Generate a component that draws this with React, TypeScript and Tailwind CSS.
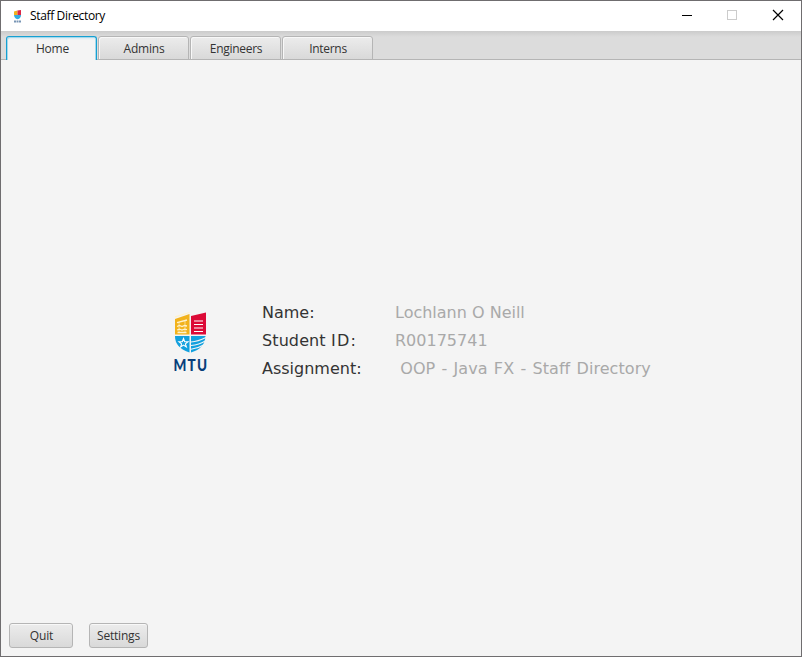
import React from "react";

const tabs = ["Admins", "Engineers", "Interns"];
const tabTracking = ["tracking-[-0.2px]", "tracking-[-0.3px]", "tracking-[-0.3px]"];

function Crest({ className }: { className: string }) {
  return (
    <svg viewBox="0 0 32 60" className={className}>
      <path d="M1 7 L15.500 2 V22.500 H1 Z" fill="#f2b21b" />
      <path d="M17 4 L32 0.5 V22.5 H17 Z" fill="#dc0a37" />
      <path d="M1 24 H15.500 V40.500 Q1 36 1 24 Z" fill="#12a0de" />
      <path d="M17 24 H31.5 Q31 36.500 17 40.500 Z" fill="#12a0de" />
      <path d="M1 4.800 L15.500 0.500 M3 10.700 L13 8 M3 14.500 L5.500 13.500 L8 14.500 L10.500 13.500 L13 14 M3 18 L5.500 17.200 L8 18 L10.500 17.200 L13 17.700 M3.500 20.500 H12.500" stroke="#fff2cc" strokeWidth="1.3" fill="none" />
      <path d="M5 10 V20 M11 9 V20" stroke="#fff2cc" strokeWidth="0.6" />
      <path d="M20 9 H29 M20 12.500 H29 M20 16 H29 M20 19.500 H29" stroke="#fff" strokeWidth="1.2" />
      <path d="M9.500 26.500 L10.700 29.800 H14 L11.400 31.900 L12.400 35 L9.500 33.100 L6.600 35 L7.600 31.900 L5 29.800 H8.300 Z" stroke="#fff" strokeWidth="1.1" fill="none" />
      <path d="M17 30 Q24 29.500 32 25.500 M17 33.500 Q25 33 32 28.500 M17 37.200 Q24 36.500 30 32.800" stroke="#f4f4f4" strokeWidth="1.1" fill="none" />
      <text transform="translate(-0.5 59) scale(0.82 1)" textLength="41" lengthAdjust="spacing" fontFamily="Lato, sans-serif" fontWeight="900" fontSize="16.500" fill="#083e7a">MTU</text>
    </svg>
  );
}

function TitleMark() {
  return (
    <svg viewBox="0 0 9 13" className="ml-3 h-[13px] w-[9px]">
      <path d="M1 1.500 L4.500 0.500 V5 H1 Z" fill="#f2b21b" />
      <path d="M4.500 0.500 L8 0 V5 H4.500 Z" fill="#dc2747" />
      <path d="M1 5 H8 Q8 8.500 4.600 9.300 Q1.200 8.500 1 5 Z" fill="#35ace0" />
      <path d="M1 11.500 H8" stroke="#7895b5" strokeWidth="2" strokeDasharray="2 0.5" />
    </svg>
  );
}

export default function App() {
  return (
    <div className="flex h-[657px] w-[802px] flex-col overflow-hidden border border-[#6f6d6f] bg-[#f4f4f4] font-['Open_Sans','Noto_Sans',sans-serif] text-[12px] text-[#333]">
      <header className="flex h-[30px] shrink-0 items-center bg-white text-black">
        <TitleMark />
        <h1 className="ml-2 text-[12px] leading-4 tracking-[-0.35px]">Staff Directory</h1>
        <svg className="ml-auto h-[30px] w-[138px]" viewBox="0 0 138 30" fill="none" shapeRendering="crispEdges">
          <path d="M19 14.500 H29" stroke="#000" />
          <rect x="64.500" y="9.500" width="9" height="9" stroke="#ccc" />
          <path d="M110 9 L120 19 M120 9 L110 19" stroke="#000" strokeWidth="1.2" shapeRendering="auto" />
        </svg>
      </header>
      <nav className="flex h-[29px] shrink-0 items-end gap-px bg-[linear-gradient(#cbcbcb,#dcdcdc_6px,#dcdcdc)] pl-[5px] shadow-[inset_0_-1px_0_#b5b5b5]">
        <button className="h-6 w-[91px] rounded-t-[3px] border border-b-0 border-[#15a0d2] bg-[linear-gradient(#dcecf3_1px,#f4f4f4_3px)] pt-px pl-0.5 leading-[22px] tracking-[-0.2px] shadow-[inset_1px_1px_0_#a5d8eb,inset_-1px_0_0_#a5d8eb]">Home</button>
        {tabs.map((t, i) => (
          <button key={t} className={`h-6 w-[91px] rounded-t-[3px] border border-[#b5b5b5] bg-[linear-gradient(#ececec,#d9d9d9)] pt-px pl-px leading-[20px] shadow-[inset_1px_1px_0_#f8f8f8] ${tabTracking[i]}`}>{t}</button>
        ))}
      </nav>
      <main className="flex flex-1 flex-col">
        <section className="flex pt-[239px] pl-[173px] font-['DejaVu_Sans',sans-serif] text-[16px] leading-7">
          <Crest className="mt-[13px] h-[60px] w-8 overflow-visible" />
          <div className="ml-14 w-[133px]">
            <p>Name:</p>
            <p className="tracking-[0.1px]">Student <span className="tracking-[1.3px]">ID:</span></p>
            <p>Assignment:</p>
          </div>
          <div className="whitespace-pre text-[#a9a9a9]">
            <p>Lochlann O Neill</p>
            <p>R00175741</p>
            <p className="-ml-px tracking-[0.06px] [word-spacing:1.1px]">{" OOP - Java FX - Staff Directory"}</p>
          </div>
        </section>
        <footer className="mt-auto mb-2 flex gap-4 pl-2">
          <button className="h-[25px] w-16 rounded-[3px] border border-[#b5b5b5] bg-[linear-gradient(#ececec,#d9d9d9)] pl-px tracking-[-0.1px] shadow-[inset_0_1px_0_#f8f8f8]">Quit</button>
          <button className="h-[25px] w-[59px] rounded-[3px] border border-[#b5b5b5] bg-[linear-gradient(#ececec,#d9d9d9)] tracking-[-0.2px] shadow-[inset_0_1px_0_#f8f8f8]">Settings</button>
        </footer>
      </main>
    </div>
  );
}
